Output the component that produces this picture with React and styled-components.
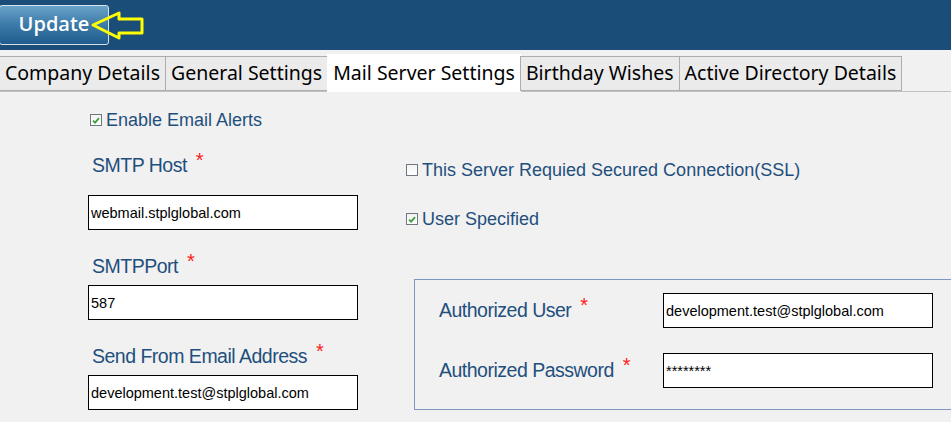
import React from "react";
import styled, { createGlobalStyle } from "styled-components";

const GlobalStyle = createGlobalStyle`
  html, body {
    margin: 0;
    padding: 0;
    background: #f1f1f1;
    overflow: hidden;
  }
`;

const Page = styled.div`
  width: 951px;
  height: 422px;
  overflow: hidden;
  background: #f1f1f1;
  font-family: "Liberation Sans", Arial, sans-serif;
`;

const Header = styled.div`
  position: relative;
  height: 50px;
  background: #1a4d77;
  display: flex;
  align-items: center;
`;

const UpdateButton = styled.button`
  height: 40px;
  width: 110px;
  margin-left: -1px;
  margin-top: -1px;
  border: 1px solid #d6e1ea;
  border-radius: 3px;
  background: linear-gradient(to bottom, #6aa3c9 0%, #3f7dab 45%, #1f5c8d 100%);
  color: #ffffff;
  font-family: "Open Sans", "Noto Sans", sans-serif;
  font-weight: 600;
  font-size: 20px;
  padding: 0 0 2px 0;
  text-align: center;
  cursor: pointer;
`;

/* annotation arrow drawn over the header */
const Arrow = styled.svg`
  position: absolute;
  left: 90px;
  top: 10px;
`;

const TabStrip = styled.div`
  display: flex;
  align-items: flex-end;
  height: 38px;
  padding-top: 3px;
  background: #f1f1f1;
  border-bottom: 1px solid #c2c2c2;
`;

const Tab = styled.div`
  height: ${(p) => (p.$active ? "38px" : "35px")};
  box-sizing: border-box;
  padding: 0 5px 2px;
  margin-bottom: ${(p) => (p.$active ? "-1px" : "0")};
  display: flex;
  align-items: center;
  background: ${(p) => (p.$active ? "#ffffff" : "#ebebeb")};
  border: 1px solid ${(p) => (p.$active ? "#ffffff" : "#adadad")};
  border-bottom: ${(p) => (p.$active ? "none" : "1px solid #adadad")};
  border-left-width: ${(p) => (p.$first ? "0" : "1px")};
  margin-left: ${(p) => (p.$first ? "0" : "-1px")};
  font-family: "Noto Sans", "Open Sans", sans-serif;
  font-size: 19.5px;
  color: #000000;
  white-space: nowrap;
`;

const Body = styled.div`
  display: flex;
  padding-left: 88px;
`;

const LeftCol = styled.div`
  width: 270px;
  display: flex;
  flex-direction: column;
`;

const RightCol = styled.div`
  margin-left: 48px;
  display: flex;
  flex-direction: column;
`;

const CheckRow = styled.label`
  display: flex;
  align-items: center;
  height: 22px;
  margin-top: ${(p) => p.$top}px;
  margin-left: ${(p) => p.$left || 0}px;
  font-size: 18px;
  color: #1f4f7d;
  white-space: nowrap;
`;

const Box = styled.span`
  width: 12px;
  height: 12px;
  box-sizing: border-box;
  border: 1px solid #6f7780;
  background: linear-gradient(to bottom, #f3f3f3, #ffffff);
  margin-right: 4px;
  display: flex;
  align-items: center;
  justify-content: center;
`;

const FieldLabel = styled.div`
  height: 22px;
  line-height: 22px;
  margin-top: ${(p) => p.$top}px;
  margin-left: 4px;
  font-size: 19.5px;
  letter-spacing: -0.5px;
  color: #1f4f7d;
  white-space: nowrap;
`;

const Star = styled.span`
  color: #ff1a1a;
  font-size: 20px;
  margin-left: 9px;
  vertical-align: 5px;
  letter-spacing: 0;
`;

const TextInput = styled.input`
  display: block;
  width: 270px;
  height: 35px;
  box-sizing: border-box;
  margin-top: ${(p) => p.$top || 0}px;
  border: 1px solid #000000;
  background: #ffffff;
  padding: 0 2px;
  font-family: "Liberation Sans", Arial, sans-serif;
  font-size: 14.5px;
  color: #000000;
  outline: none;
`;

const AuthBox = styled.div`
  margin-top: 49px;
  margin-left: 8px;
  width: 560px;
  height: 131px;
  box-sizing: border-box;
  border: 1px solid #7d98bf;
  padding: 13px 0 0 24px;
  display: grid;
  grid-template-columns: 224px 271px;
  grid-auto-rows: 35px;
  row-gap: 25px;
  align-items: center;
`;

const AuthLabel = styled.div`
  padding-bottom: 5px;
  font-size: 19.5px;
  letter-spacing: -0.5px;
  color: #1f4f7d;
  white-space: nowrap;
`;

const Check = ({ on }) => (
  <Box>
    {on && (
      <svg width="8" height="7" viewBox="0 0 8 7">
        <path d="M1 3.6 L3.1 5.6 L7 1.2" fill="none" stroke="#3d9e3d" strokeWidth="1.8" />
      </svg>
    )}
  </Box>
);

const tabs = [
  "Company Details",
  "General Settings",
  "Mail Server Settings",
  "Birthday Wishes",
  "Active Directory Details",
];

export default function App() {
  return (
    <Page>
      <GlobalStyle />
      <Header>
        <UpdateButton type="button">Update</UpdateButton>
        <Arrow width="56" height="32" viewBox="90 10 56 32">
          <polygon
            points="93,25 119,13 119,19 142,19 142,33 119,33 119,38"
            fill="none"
            stroke="#ffff00"
            strokeWidth="3"
            strokeLinejoin="round"
          />
        </Arrow>
      </Header>

      <TabStrip>
        {tabs.map((t, i) => (
          <Tab key={t} $first={i === 0} $active={i === 2}>
            {t}
          </Tab>
        ))}
      </TabStrip>

      <Body>
        <LeftCol>
          <CheckRow $top={17} $left={2}>
            <Check on />
            Enable Email Alerts
          </CheckRow>

          <FieldLabel $top={18}>
            SMTP Host<Star>*</Star>
          </FieldLabel>
          <TextInput $top={24} defaultValue="webmail.stplglobal.com" />

          <FieldLabel $top={20}>
            SMTPPort<Star>*</Star>
          </FieldLabel>
          <TextInput $top={13} defaultValue="587" />

          <FieldLabel $top={20}>
            Send From Email Address<Star>*</Star>
          </FieldLabel>
          <TextInput $top={13} defaultValue="development.test@stplglobal.com" />
        </LeftCol>

        <RightCol>
          <CheckRow $top={67}>
            <Check />
            This Server Requied Secured Connection(SSL)
          </CheckRow>
          <CheckRow $top={27}>
            <Check on />
            User Specified
          </CheckRow>

          <AuthBox>
            <AuthLabel>
              Authorized User<Star>*</Star>
            </AuthLabel>
            <TextInput defaultValue="development.test@stplglobal.com" />
            <AuthLabel>
              Authorized Password<Star>*</Star>
            </AuthLabel>
            <TextInput type="text" defaultValue="********" />
          </AuthBox>
        </RightCol>
      </Body>
    </Page>
  );
}
